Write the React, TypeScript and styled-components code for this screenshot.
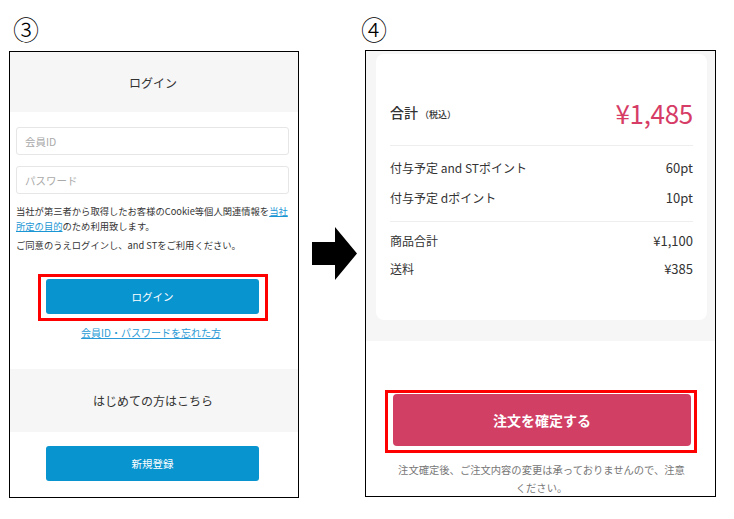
import styled, { createGlobalStyle } from "styled-components";

const GlobalStyle = createGlobalStyle`
  html, body {
    margin: 0;
    padding: 0;
    background: #fff;
  }
  body {
    font-family: "Noto Sans CJK JP", "Noto Sans", sans-serif;
    color: #333;
  }
  * {
    box-sizing: border-box;
  }
`;

const Page = styled.div`
  width: 734px;
  height: 519px;
  display: flex;
  align-items: flex-start;
  padding-left: 9px;
  overflow: hidden;
  background: #fff;
`;

const Column = styled.div<{ $width: number }>`
  width: ${(p) => p.$width}px;
  flex-shrink: 0;
  display: flex;
  flex-direction: column;
`;

const StepLabel = styled.div<{ $shift: number; $height: number }>`
  height: ${(p) => p.$height}px;
  margin-left: ${(p) => p.$shift}px;
  padding-top: 16px;
  font-size: 26px;
  line-height: 26px;
  font-weight: 300;
  color: #000;
`;

const Frame = styled.div`
  height: 447px;
  border: 1px solid #000;
  background: #fff;
  display: flex;
  flex-direction: column;
  overflow: hidden;
`;

/* ---------- login panel ---------- */

const GrayHeader = styled.div<{ $height: number }>`
  height: ${(p) => p.$height}px;
  flex-shrink: 0;
  background: #f6f6f6;
  display: flex;
  align-items: center;
  justify-content: center;
  font-size: 12px;
  color: #333;
  padding-right: 2px;
`;

const FormSection = styled.div`
  padding: 15px 9px 30px 6px;
`;

const TextInput = styled.input`
  display: block;
  width: 100%;
  height: 28px;
  border: 1px solid #e6e6e6;
  border-radius: 3px;
  padding: 0 8px;
  font-family: inherit;
  font-size: 10.5px;
  color: #333;
  background: #fff;
  outline: none;
  & + & {
    margin-top: 11px;
  }
  &::placeholder {
    color: #aaa;
  }
`;

const Notice = styled.p<{ $gap: number }>`
  margin: ${(p) => p.$gap}px 0 0;
  font-size: 9.3px;
  line-height: 15px;
  color: #333;
`;

const InlineLink = styled.a`
  color: #1a96d4;
  text-decoration: underline;
`;

const Highlight = styled.div<{ $pad: string; $margin: string }>`
  border: 3px solid #f00;
  padding: ${(p) => p.$pad};
  margin: ${(p) => p.$margin};
`;

const BlueButton = styled.button`
  display: flex;
  align-items: center;
  justify-content: center;
  width: 100%;
  height: 35px;
  border: none;
  border-radius: 3px;
  background: #0894cf;
  color: #fff;
  font-family: inherit;
  font-size: 10.5px;
`;

const ForgotLink = styled.a`
  display: block;
  margin-top: 6px;
  text-align: center;
  font-size: 10px;
  line-height: 12px;
  color: #2a9bd6;
  text-decoration: underline;
  padding-right: 3px;
`;

const RegisterSection = styled.div`
  padding: 14px 39px 0 36px;
`;

/* ---------- arrow ---------- */

const ArrowCol = styled.div`
  width: 66px;
  flex-shrink: 0;
  padding: 227px 0 0 13px;
`;

/* ---------- order panel ---------- */

const SummaryArea = styled.div`
  background: #f6f6f6;
  padding: 3px 8px 21px 10px;
`;

const Card = styled.div`
  background: #fff;
  border-radius: 8px;
  padding: 40px 14px 38px;
`;

const TotalRow = styled.div`
  height: 36px;
  display: flex;
  align-items: center;
  justify-content: space-between;
`;

const TotalLabel = styled.span`
  font-size: 14px;
  font-weight: 500;
  color: #333;
`;

const TaxNote = styled.span`
  font-size: 9px;
  font-weight: 500;
  margin-left: 2px;
`;

const TotalPrice = styled.span`
  font-size: 26px;
  color: #d63c66;
  letter-spacing: -0.3px;
`;

const Group = styled.div<{ $pad: string; $gap: number }>`
  border-top: 1px solid #eee;
  margin-top: ${(p) => p.$gap}px;
  padding: ${(p) => p.$pad};
`;

const Row = styled.div<{ $height: number }>`
  height: ${(p) => p.$height}px;
  display: flex;
  align-items: center;
  justify-content: space-between;
  font-size: 12px;
  color: #333;
`;

const RowValue = styled.span`
  font-size: 13px;
`;

const ActionArea = styled.div`
  padding-top: 49px;
`;

const PinkButton = styled.button`
  display: flex;
  align-items: center;
  justify-content: center;
  width: 100%;
  height: 52px;
  border: none;
  border-radius: 4px;
  background: #d14064;
  color: #fff;
  font-family: inherit;
  font-size: 14px;
  font-weight: 700;
`;

const CautionText = styled.p`
  margin: 8px 25px 0 27px;
  font-size: 10.3px;
  line-height: 18px;
  color: #777;
  text-align: center;
`;

export default function App() {
  return (
    <>
      <GlobalStyle />
      <Page>
        <Column $width={290}>
          <StepLabel $shift={4} $height={51}>③</StepLabel>
          <Frame>
            <GrayHeader $height={60}>ログイン</GrayHeader>
            <FormSection>
              <TextInput placeholder="会員ID" />
              <TextInput placeholder="パスワード" type="password" />
              <Notice $gap={10}>
                当社が第三者から取得したお客様のCookie等個人関連情報を
                <InlineLink>当社所定の目的</InlineLink>のため利用致します。
              </Notice>
              <Notice $gap={4}>ご同意のうえログインし、and STをご利用ください。</Notice>
              <Highlight $pad="2px 6px 4px 5px" $margin="21px 21px 0 22px">
                <BlueButton>ログイン</BlueButton>
              </Highlight>
              <ForgotLink>会員ID・パスワードを忘れた方</ForgotLink>
            </FormSection>
            <GrayHeader $height={63}>はじめての方はこちら</GrayHeader>
            <RegisterSection>
              <BlueButton>新規登録</BlueButton>
            </RegisterSection>
          </Frame>
        </Column>

        <ArrowCol>
          <svg width="45" height="53" viewBox="0 0 45 53">
            <polygon points="0,15 23,15 23,0 45,26.5 23,53 23,38 0,38" fill="#000" />
          </svg>
        </ArrowCol>

        <Column $width={351}>
          <StepLabel $shift={-4} $height={50}>④</StepLabel>
          <Frame>
            <SummaryArea>
              <Card>
                <TotalRow>
                  <TotalLabel>
                    合計<TaxNote>（税込）</TaxNote>
                  </TotalLabel>
                  <TotalPrice>¥1,485</TotalPrice>
                </TotalRow>
                <Group $gap={15} $pad="6px 0 9px">
                  <Row $height={30}>
                    <span>付与予定 and STポイント</span>
                    <RowValue>60pt</RowValue>
                  </Row>
                  <Row $height={30}>
                    <span>付与予定 dポイント</span>
                    <RowValue>10pt</RowValue>
                  </Row>
                </Group>
                <Group $gap={0} $pad="4px 0 0">
                  <Row $height={28}>
                    <span>商品合計</span>
                    <RowValue>¥1,100</RowValue>
                  </Row>
                  <Row $height={28}>
                    <span>送料</span>
                    <RowValue>¥385</RowValue>
                  </Row>
                </Group>
              </Card>
            </SummaryArea>
            <ActionArea>
              <Highlight $pad="1px 3px 4px 5px" $margin="0 18px 0 19px">
                <PinkButton>注文を確定する</PinkButton>
              </Highlight>
              <CautionText>
                注文確定後、ご注文内容の変更は承っておりませんので、注意ください。
              </CautionText>
            </ActionArea>
          </Frame>
        </Column>
      </Page>
    </>
  );
}
